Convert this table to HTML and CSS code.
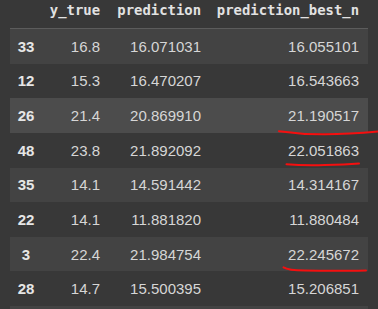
FILE: index.html
```html
<!DOCTYPE html>
<html>
<head>
<meta charset="utf-8">
<link rel="stylesheet" href="styles.css">
</head>
<body>
<div class="page">
  <div class="table">
    <div class="row head">
      <div class="c idx"></div>
      <div class="c c1">y_true</div>
      <div class="c c2">prediction</div>
      <div class="c c3">prediction_best_n</div>
    </div>
    <div class="row odd"><div class="c idx">33</div><div class="c c1">16.8</div><div class="c c2">16.071031</div><div class="c c3">16.055101</div></div>
    <div class="row"><div class="c idx">12</div><div class="c c1">15.3</div><div class="c c2">16.470207</div><div class="c c3">16.543663</div></div>
    <div class="row odd hover"><div class="c idx">26</div><div class="c c1">21.4</div><div class="c c2">20.869910</div><div class="c c3">21.190517</div></div>
    <div class="row"><div class="c idx">48</div><div class="c c1">23.8</div><div class="c c2">21.892092</div><div class="c c3">22.051863</div></div>
    <div class="row odd"><div class="c idx">35</div><div class="c c1">14.1</div><div class="c c2">14.591442</div><div class="c c3">14.314167</div></div>
    <div class="row"><div class="c idx">22</div><div class="c c1">14.1</div><div class="c c2">11.881820</div><div class="c c3">11.880484</div></div>
    <div class="row odd"><div class="c idx">3</div><div class="c c1">22.4</div><div class="c c2">21.984754</div><div class="c c3">22.245672</div></div>
    <div class="row"><div class="c idx">28</div><div class="c c1">14.7</div><div class="c c2">15.500395</div><div class="c c3">15.206851</div></div>
    <div class="row odd"><div class="c idx"></div><div class="c c1"></div><div class="c c2"></div><div class="c c3"></div></div>
  </div>
  <svg class="marks" width="378" height="309" viewBox="0 0 378 309">
    <path d="M279 131.2 C 295 133.5, 310 134.4, 325 134.3 C 345 134.2, 362 133, 378 131.6" />
    <path d="M286.5 164.3 C 298 165.3, 310 165.5, 325 165.1 C 340 164.8, 350 164.3, 359 163.6" />
    <path d="M283.5 267.4 C 287 269.6, 292 270.4, 305 270.6 C 330 270.9, 350 270.8, 366 270.4" />
  </svg>
</div>
</body>
</html>
```
FILE: styles.css
```css
html, body {
  margin: 0;
  padding: 0;
  background: #383838;
}
.page {
  position: relative;
  width: 378px;
  height: 309px;
  overflow: hidden;
  padding-left: 10px;
  box-sizing: border-box;
}
.table {
  width: 358px;
  display: flex;
  flex-direction: column;
}
.row {
  display: flex;
  align-items: center;
  height: 34.625px;
  font-family: "Liberation Sans", Arial, sans-serif;
  font-size: 15px;
  color: #d6d6d6;
}
.row.odd { background: #434343; }
.row.hover { background: #4c4c4c; }
.row.head {
  height: 29px;
  border-bottom: 1px solid #5c5c5c;
  font-family: "DejaVu Sans Mono", "Liberation Mono", monospace;
  font-weight: bold;
  font-size: 13.9px;
  color: #e2e2e2;
  align-items: flex-start;
  padding-top: 2px;
  box-sizing: border-box;
}
.c {
  box-sizing: border-box;
  white-space: nowrap;
  text-align: right;
  padding-right: 8px;
}
.idx {
  width: 32px;
  text-align: center;
  padding: 0 0 0 0;
  font-weight: bold;
  color: #e6e6e6;
}
.c1 { width: 66px; }
.c2 { width: 101px; }
.c3 { width: 159px; padding-right: 9px; }
.marks {
  position: absolute;
  left: 0;
  top: 0;
}
.marks path {
  fill: none;
  stroke: #f50f0f;
  stroke-width: 2;
  stroke-linecap: round;
}
```
